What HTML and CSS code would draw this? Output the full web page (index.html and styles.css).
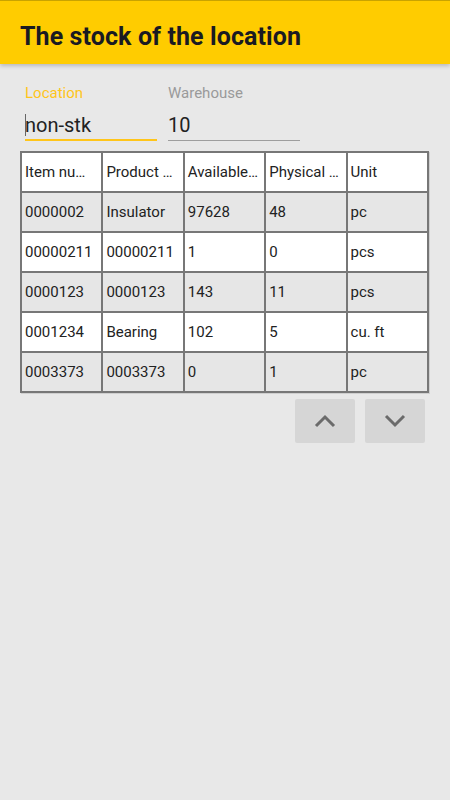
FILE: index.html
```html
<!doctype html>
<html>
<head>
	<meta charset="utf-8">
	<meta name="viewport" content="width=device-width,initial-scale=1.0">
	<link rel="stylesheet" href="styles.css">
</head>

<body>

	<div class="appbar">
		<h1>The stock of the location</h1>
	</div>

	<div class="fields">
		<div class="field active">
			<label>Location</label>
			<div class="value"><span class="caret"></span>non-stk</div>
		</div>
		<div class="field">
			<label>Warehouse</label>
			<div class="value">10</div>
		</div>
	</div>

	<table class="stock">
		<tr class="head">
			<td>Item nu…</td>
			<td>Product …</td>
			<td>Available…</td>
			<td>Physical …</td>
			<td>Unit</td>
		</tr>
		<tr class="odd"><td>0000002</td><td>Insulator</td><td>97628</td><td>48</td><td>pc</td></tr>
		<tr><td>00000211</td><td>00000211</td><td>1</td><td>0</td><td>pcs</td></tr>
		<tr class="odd"><td>0000123</td><td>0000123</td><td>143</td><td>11</td><td>pcs</td></tr>
		<tr><td>0001234</td><td>Bearing</td><td>102</td><td>5</td><td>cu. ft</td></tr>
		<tr class="odd"><td>0003373</td><td>0003373</td><td>0</td><td>1</td><td>pc</td></tr>
	</table>

	<div class="pager">
		<button class="btn">
			<svg width="22" height="14" viewBox="0 0 22 14"><path d="M2 12 L11 3 L20 12" fill="none" stroke="#6b6b6b" stroke-width="3"/></svg>
		</button>
		<button class="btn">
			<svg width="22" height="14" viewBox="0 0 22 14"><path d="M2 2 L11 11 L20 2" fill="none" stroke="#6b6b6b" stroke-width="3"/></svg>
		</button>
	</div>

</body>
</html>
```

FILE: styles.css
```css
html, body { margin: 0;padding: 0; }
body { background-color: #e8e8e8;color: #222;font-family: Roboto, "Noto Sans", sans-serif;width: 450px;height: 800px; }

.appbar { height: 63px;background: #ffcc00;border-top: 1px solid #c9a300;box-shadow: 0 2px 4px rgba(0,0,0,0.2);display: flex;align-items: center;padding: 0 20px; }
.appbar h1 { margin: 0;font-size: 25px;font-weight: bold;color: #1a1a22;letter-spacing: 0.1px;padding-top: 8px; }

.fields { display: flex;gap: 11px;padding: 20px 0 0 25px; }
.field { width: 132px;display: flex;flex-direction: column; }
.field label { font-size: 15px;color: #9a9a9a;line-height: 17px;padding-top: 1px; }
.field .value { font-size: 20px;line-height: 24px;margin-top: 11px;padding-bottom: 3px;border-bottom: 1px solid #9e9e9e;position: relative; }
.field.active label { color: #ffc51a; }
.field.active .value { border-bottom: 2px solid #ffc51a;padding-bottom: 2px; }
.caret { position: absolute;left: 0;top: 1px;width: 1px;height: 22px;background: #666; }

.stock { margin: 10px 0 0 20px;width: 409px;border-collapse: separate;border-spacing: 0;table-layout: fixed;border: 1px solid #777;box-shadow: 1px 1px 0 #cfcfcf; }
.stock td { border: 1px solid #777;height: 38px;padding: 0 3px;font-size: 15px;color: #222;white-space: nowrap;overflow: hidden;background: #fff; }
.stock tr.odd td { background: #e6e6e6; }

.pager { display: flex;justify-content: flex-end;gap: 10px;padding: 6px 25px 0 0; }
.btn { width: 60px;height: 44px;border: none;border-radius: 2px;background: #d6d6d6;display: flex;align-items: center;justify-content: center;cursor: pointer;outline: none;padding: 0; }
```
